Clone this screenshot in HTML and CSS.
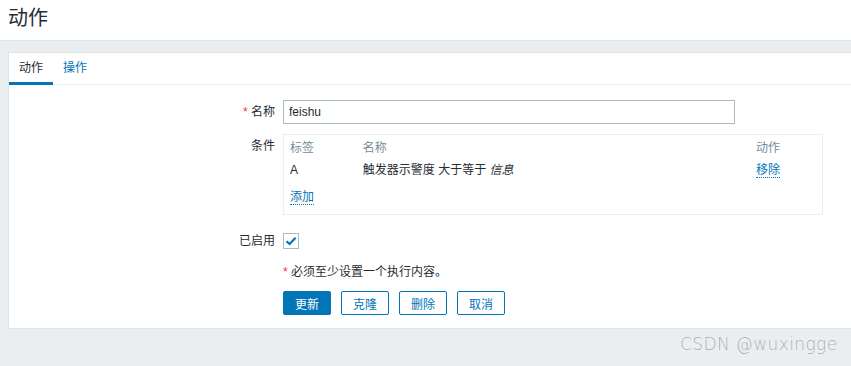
FILE: index.html
```html
<!DOCTYPE html>
<html lang="zh">
<head>
<meta charset="utf-8">
<link rel="stylesheet" href="styles.css">
</head>
<body>
<header class="page-header"><h1 class="title">动作</h1></header>
<main class="wrapper">
  <section class="card">
    <nav class="tabs">
      <span class="tab active">动作</span>
      <span class="tab">操作</span>
    </nav>
    <form class="form">
      <label class="label"><span class="req">*</span> 名称</label>
      <div class="field row-name"><input class="text-input" type="text" value="feishu"></div>

      <label class="label label-cond">条件</label>
      <div class="field row-cond">
        <div class="cond-box">
          <div class="cond-head">
            <span class="c1">标签</span><span class="c2">名称</span><span class="c3">动作</span>
          </div>
          <div class="cond-row">
            <span class="c1">A</span><span class="c2">触发器示警度 大于等于 <i>信息</i></span><span class="c3"><a class="link">移除</a></span>
          </div>
          <div class="cond-add"><a class="link">添加</a></div>
        </div>
      </div>

      <label class="label label-enabled">已启用</label>
      <div class="field row-enabled">
        <span class="checkbox"><svg width="12" height="10" viewBox="0 0 12 10"><path d="M1.5 5.2 L4.6 8 L10.6 1.8" fill="none" stroke="#0275b8" stroke-width="2.2"/></svg></span>
      </div>

      <div class="spacer"></div>
      <div class="field row-note"><span class="req">*</span> 必须至少设置一个执行内容。</div>

      <div class="spacer"></div>
      <div class="field row-buttons">
        <button type="button" class="btn primary">更新</button>
        <button type="button" class="btn">克隆</button>
        <button type="button" class="btn">删除</button>
        <button type="button" class="btn">取消</button>
      </div>
    </form>
  </section>
</main>
<div class="watermark">CSDN @wuxingge</div>
</body>
</html>
```

FILE: styles.css
```css
html, body {
  margin: 0;
  padding: 0;
}
body {
  width: 851px;
  height: 366px;
  overflow: hidden;
  background: #ebeef0;
  font-family: "Liberation Sans", Arial, "Noto Sans CJK SC", sans-serif;
  font-size: 12px;
  color: #1f2c33;
  position: relative;
}
.page-header {
  background: #fff;
  height: 40px;
  border-bottom: 1px solid #e3e6e8;
  display: flex;
  align-items: center;
  padding-left: 8px;
}
.title {
  margin: 0;
  font-size: 20px;
  font-weight: normal;
  line-height: 24px;
  color: #1f2c33;
  position: relative;
  top: -2px;
}
.wrapper {
  padding: 11px 0 0 8px;
}
.card {
  background: #fff;
  border: 1px solid #dfe4e7;
  border-right: none;
  height: 277px;
  box-sizing: border-box;
}
.tabs {
  display: flex;
  height: 31px;
  border-bottom: 1px solid #ebeef0;
  box-sizing: content-box;
}
.tab {
  padding: 0 10px 3px;
  display: flex;
  align-items: center;
  height: 26px;
  color: #0275b8;
  border-bottom: 3px solid transparent;
  box-sizing: content-box;
  margin-bottom: -1px;
}
.tab.active {
  color: #1f2c33;
  border-bottom-color: #0275b8;
}
.form {
  display: grid;
  grid-template-columns: 266px 1fr;
  column-gap: 8px;
  padding-top: 15px;
  align-items: start;
}
.label {
  text-align: right;
  line-height: 14px;
  padding-top: 5px;
}
.label-cond { padding-top: 5px; }
.label-enabled { padding-top: 1px; }
.req { color: #e33734; }
.row-name { height: 24px; }
.text-input {
  width: 452px;
  height: 24px;
  box-sizing: border-box;
  border: 1px solid #acbbc2;
  padding: 0 5px;
  font-family: inherit;
  font-size: 12px;
  color: #1f2c33;
  outline: none;
  display: block;
}
.row-cond { margin-top: 10px; }
.label-cond { margin-top: 10px; }
.cond-box {
  width: 540px;
  height: 81px;
  box-sizing: border-box;
  border: 1px solid #ebeef0;
  padding: 6px 6px 0 6px;
}
.cond-head, .cond-row {
  display: flex;
  line-height: 14px;
}
.cond-head { color: #768d99; }
.cond-row { margin-top: 8px; }
.c1 { width: 73px; }
.c2 { width: 394px; }
.c3 { width: 60px; }
.cond-add { margin-top: 13px; line-height: 14px; }
.link {
  color: #0275b8;
  border-bottom: 1px dotted #0275b8;
  cursor: pointer;
}
.row-enabled, .label-enabled { margin-top: 18px; }
.checkbox {
  width: 16px;
  height: 16px;
  box-sizing: border-box;
  border: 1px solid #acbbc2;
  display: flex;
  align-items: center;
  justify-content: center;
}
.row-note {
  margin-top: 16px;
  line-height: 14px;
}
.row-buttons {
  margin-top: 12px;
  display: flex;
  gap: 10px;
}
.btn {
  width: 48px;
  height: 24px;
  box-sizing: border-box;
  border: 1px solid #0275b8;
  border-radius: 2px;
  background: #fff;
  color: #0275b8;
  font-family: inherit;
  font-size: 12px;
  padding: 0;
}
.btn.primary {
  background: #0275b8;
  color: #fff;
}
.watermark {
  position: absolute;
  left: 680px;
  top: 334px;
  font-family: "DejaVu Sans", sans-serif;
  font-size: 17px;
  font-weight: 200;
  color: #a8adb0;
  text-shadow: 0 0 1px #fff;
  letter-spacing: 0.4px;
}
```
